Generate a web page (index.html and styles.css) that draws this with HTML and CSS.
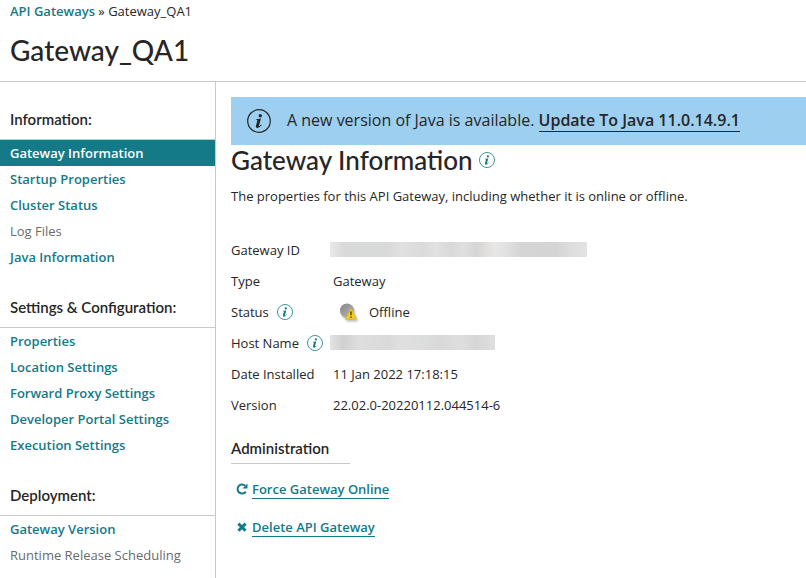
FILE: index.html
```
<!DOCTYPE html>
<html lang="en">
<head>
<meta charset="utf-8">
<title>Gateway_QA1</title>
<link rel="stylesheet" href="styles.css">
</head>
<body>
<svg class="defs" aria-hidden="true">
  <symbol id="info" viewBox="0 0 24 24">
    <circle cx="12" cy="12" r="11.3" fill="none" stroke="currentColor" stroke-width="1.2"/>
    <circle cx="13.3" cy="6.7" r="1.7" fill="currentColor"/>
    <path d="M9.2 10.2 14 9.6 12 16.6Q11.8 17.5 12.5 17.1L14.2 15.6 14.7 16.2Q12.4 19 10.4 19 8.3 19 9 16.6L10.4 11.6Q10.6 11 9.2 10.9Z" fill="currentColor"/>
  </symbol>
</svg>
<header class="page-header">
  <nav class="breadcrumb" aria-label="Breadcrumb"><a href="#">API Gateways</a> » Gateway_QA1</nav>
  <h1>Gateway_QA1</h1>
</header>
<div class="layout">
  <nav class="sidebar" aria-label="Gateway">
    <h3>Information:</h3>
    <ul>
      <li><a class="active" href="#" aria-current="page">Gateway Information</a></li>
      <li><a href="#">Startup Properties</a></li>
      <li><a href="#">Cluster Status</a></li>
      <li><span>Log Files</span></li>
      <li><a href="#">Java Information</a></li>
    </ul>
    <h3>Settings &amp; Configuration:</h3>
    <ul>
      <li><a href="#">Properties</a></li>
      <li><a href="#">Location Settings</a></li>
      <li><a href="#">Forward Proxy Settings</a></li>
      <li><a href="#">Developer Portal Settings</a></li>
      <li><a href="#">Execution Settings</a></li>
    </ul>
    <h3>Deployment:</h3>
    <ul>
      <li><a href="#">Gateway Version</a></li>
      <li><span>Runtime Release Scheduling</span></li>
    </ul>
  </nav>
  <main class="content">
    <div class="banner">
      <svg class="banner-icon" aria-hidden="true"><use href="#info"/></svg>
      <p>A new version of Java is available. <a href="#">Update To Java 11.0.14.9.1</a></p>
    </div>
    <h2>Gateway Information <svg class="info" aria-hidden="true"><use href="#info"/></svg></h2>
    <p class="intro">The properties for this API Gateway, including whether it is online or offline.</p>
    <dl class="properties">
      <dt>Gateway ID</dt>
      <dd><span class="redacted redacted-id"></span></dd>
      <dt>Type</dt>
      <dd>Gateway</dd>
      <dt>Status <svg class="info" aria-hidden="true"><use href="#info"/></svg></dt>
      <dd class="status">
        <svg class="status-icon" viewBox="0 0 20 20" aria-hidden="true">
          <defs>
            <linearGradient id="ball" x1="0" y1="0" x2="1" y2="1"><stop offset="0" stop-color="#858585"/><stop offset="1" stop-color="#b8b8b8"/></linearGradient>
          </defs>
          <circle cx="8" cy="8.5" r="7" fill="url(#ball)"/>
          <path d="M12 6.5 17.5 17H6.5Z" fill="#f4cc24" stroke="#e3b821" stroke-linejoin="round"/>
          <path d="M11.2 9.5H12.8L12.5 13.5H11.5ZM11.3 14.4H12.7V15.8H11.3Z" fill="#4b3c10"/>
        </svg>
        Offline
      </dd>
      <dt>Host Name <svg class="info" aria-hidden="true"><use href="#info"/></svg></dt>
      <dd><span class="redacted redacted-host"></span></dd>
      <dt>Date Installed</dt>
      <dd>11 Jan 2022 17:18:15</dd>
      <dt>Version</dt>
      <dd>22.02.0-20220112.044514-6</dd>
    </dl>
    <h3 class="admin-title">Administration</h3>
    <ul class="actions">
      <li>
        <svg viewBox="0 0 12 12" aria-hidden="true"><path d="M9.8 8.6A4.5 4.5 0 1 1 9.2 2.8" fill="none" stroke="currentColor" stroke-width="2"/><path d="M11.5.6V5.6H6.5Z" fill="currentColor"/></svg>
        <a href="#">Force Gateway Online</a>
      </li>
      <li>
        <svg viewBox="0 0 12 12" aria-hidden="true"><path d="M2.4 2.6 9.6 9.8M9.6 2.6 2.4 9.8" stroke="currentColor" stroke-width="3"/></svg>
        <a href="#">Delete API Gateway</a>
      </li>
    </ul>
  </main>
</div>
</body>
</html>
```
FILE: styles.css
```
* { box-sizing: border-box; }

body {
  margin: 0;
  min-height: 100vh;
  display: flex;
  flex-direction: column;
  background: #fff;
  color: #262626;
  font: 13px/18px "Open Sans", sans-serif;
}

h1, h2, h3, p, ul, dl, dd { margin: 0; padding: 0; }
ul { list-style: none; }
h1, h2, h3 { font-family: Lato, "Open Sans", sans-serif; font-weight: 500; }
h3 { font-size: 15px; font-weight: 600; line-height: 20px; }
a { color: #147a87; font-weight: 600; text-decoration: none; }
.defs { position: absolute; width: 0; height: 0; }

.page-header { padding: 2px 10px 13px; border-bottom: 1px solid #c8c8c8; }
.page-header h1 { margin-top: 12px; font-size: 28px; line-height: 36px; }

.layout { flex: 1; display: grid; grid-template-columns: 216px minmax(0, 1fr); }

.sidebar { border-right: 1px solid #c8c8c8; }
.sidebar h3 { padding: 27px 10px 10px; border-bottom: 1px solid #c8c8c8; }
.sidebar li a, .sidebar li span { display: block; padding: 0 10px; line-height: 26px; }
.sidebar li span { color: #6b6b6b; }
.sidebar .active { background: #147a87; color: #fff; }

.content { padding: 15px 0 16px 15px; }

.banner {
  display: flex;
  align-items: center;
  gap: 16px;
  min-height: 48px;
  padding: 0 16px;
  background: #9dcff0;
  font-size: 16px;
  line-height: 22px;
}
.banner p { padding-bottom: 2px; }
.banner a { color: #262626; border-bottom: 1px solid; }
.banner-icon { flex: none; width: 24px; height: 24px; }

h2 { display: flex; align-items: center; gap: 6px; font-size: 26px; line-height: 30px; }
.info { flex: none; width: 16px; height: 16px; color: #147a87; }
.intro { margin-top: 12px; }

.properties {
  display: grid;
  grid-template-columns: 102px 1fr;
  grid-auto-rows: 31px;
  align-items: center;
  margin-top: 29px;
}
.properties dt { display: flex; align-items: center; gap: 8px; white-space: nowrap; }
.status { display: flex; align-items: center; gap: 10px; }
.status-icon { width: 20px; height: 20px; margin-left: 6px; filter: drop-shadow(1px 2px 1px #bbb); }

.redacted { display: block; height: 15px; margin-left: -3px; }
.redacted-id {
  width: 257px;
  background: linear-gradient(90deg, #e9e8e6, #d8d9d9 6%, #d8d9d9 22%, #e2e0e2 28%, #dadada 36%, #e2e2e2 41%, #d9d9d9 47%, #e0e0e0 52%, #d5d5d5 57%, #e9e7e5 64%, #e2e2e2 68%, #d5d5d5 74%, #d4d4d4 88%, #dedede 94%, #e3e3e5);
}
.redacted-host {
  width: 165px;
  background: linear-gradient(90deg, #e3e3e3, #d0d0d0 8%, #dedede 18%, #d9d9d9 36%, #e0e0e0 43%, #dcdddd 55%, #dad9da 68%, #dedede 80%, #d6d6d6 88%, #dfdfdf);
}

.admin-title {
  width: 119px;
  margin-top: 18px;
  padding-bottom: 5px;
  border-bottom: 1px solid #c8c8c8;
}
.actions { display: grid; gap: 20px; margin-top: 16px; padding-left: 5px; }
.actions li { display: flex; align-items: center; gap: 4px; height: 18px; color: #147a87; }
.actions a { border-bottom: 1px solid; }
.actions svg { flex: none; width: 12px; height: 12px; }
```
